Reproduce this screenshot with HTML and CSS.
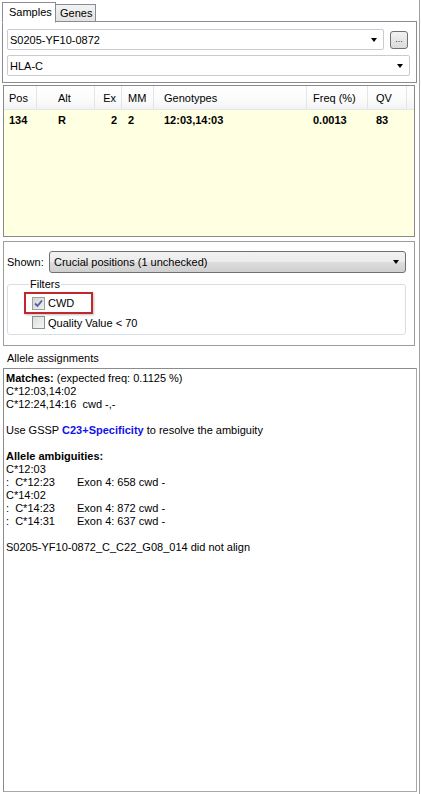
FILE: index.html
```html
<!DOCTYPE html>
<html>
<head>
<meta charset="utf-8">
<link rel="stylesheet" href="styles.css">
</head>
<body>
<div class="app">
  <div class="tabs">
    <div class="tab active">Samples</div>
    <div class="tab">Genes</div>
  </div>
  <div class="tabpage">
    <div class="row1">
      <div class="combo grow"><span>S0205-YF10-0872</span><span class="arrow"></span></div>
      <div class="dots">...</div>
    </div>
    <div class="combo"><span>HLA-C</span><span class="arrow"></span></div>
  </div>

  <div class="grid">
    <div class="ghead">
      <div class="c c1">Pos</div>
      <div class="c c2">Alt</div>
      <div class="c c3">Ex</div>
      <div class="c c4">MM</div>
      <div class="c c5">Genotypes</div>
      <div class="c c6">Freq (%)</div>
      <div class="c c7">QV</div>
      <div class="c c8"></div>
    </div>
    <div class="grow-row">
      <div class="c c1">134</div>
      <div class="c c2">R</div>
      <div class="c c3">2</div>
      <div class="c c4">2</div>
      <div class="c c5">12:03,14:03</div>
      <div class="c c6">0.0013</div>
      <div class="c c7">83</div>
      <div class="c c8"></div>
    </div>
  </div>

  <div class="panel">
    <div class="shown">
      <span class="shown-label">Shown:</span>
      <div class="dropbtn"><span>Crucial positions (1 unchecked)</span><span class="arrow"></span></div>
    </div>
    <fieldset class="filters">
      <legend>Filters</legend>
      <div class="chk chk-hl">
        <span class="box checked"><svg width="9" height="9" viewBox="0 0 9 9"><path d="M1 4.5 L3.5 7 L8 1.5" fill="none" stroke="#4a5fa8" stroke-width="1.8"/></svg></span>
        <span>CWD</span>
      </div>
      <div class="chk chk-q">
        <span class="box"></span>
        <span>Quality Value &lt; 70</span>
      </div>
    </fieldset>
  </div>

  <div class="al-label">Allele assignments</div>
  <div class="textbox">
    <div><b>Matches:</b> (expected freq: 0.1125 %)</div>
    <div>C*12:03,14:02</div>
    <div>C*12:24,14:16  cwd -,-</div>
    <div>&nbsp;</div>
    <div>Use GSSP <b class="blue">C23+Specificity</b> to resolve the ambiguity</div>
    <div>&nbsp;</div>
    <div><b>Allele ambiguities:</b></div>
    <div>C*12:03</div>
    <div><span class="amb">:  C*12:23</span>Exon 4: 658 cwd -</div>
    <div>C*14:02</div>
    <div><span class="amb">:  C*14:23</span>Exon 4: 872 cwd -</div>
    <div><span class="amb">:  C*14:31</span>Exon 4: 637 cwd -</div>
    <div>&nbsp;</div>
    <div>S0205-YF10-0872_C_C22_G08_014 did not align</div>
  </div>
</div>
</body>
</html>
```

FILE: styles.css
```css
* { box-sizing: border-box; }
html, body { margin: 0; padding: 0; background: #ffffff; }
body {
  font-family: "Liberation Sans", Arial, sans-serif;
  font-size: 11px;
  color: #000;
  width: 421px;
  height: 794px;
  overflow: hidden;
}
.app {
  width: 420px;
  height: 794px;
  border-right: 1px solid #a0a0a0;
  display: flex;
  flex-direction: column;
}
.tabs {
  display: flex;
  align-items: flex-end;
  height: 22px;
  padding-left: 2px;
  position: relative;
  z-index: 1;
}
.tab {
  border: 1px solid #898c95;
  border-bottom: none;
  border-left: none;
  padding: 0 4px;
  height: 17px;
  line-height: 17px;
  background: linear-gradient(#f3f3f3, #e3e3e3);
  width: 40px;
  margin-bottom: 1px;
}
.tab.active {
  width: 54px;
  height: 21px;
  line-height: 18px;
  background: #ffffff;
  padding-left: 6px;
  border-left: 1px solid #898c95;
  border-bottom: 1px solid #fff;
  margin-bottom: -1px;
}
.tabpage {
  margin-left: 2px;
  width: 415px;
  border: 1px solid #898c95;
  padding: 7px 6px 6px 4px;
  display: flex;
  flex-direction: column;
  gap: 5px;
  margin-top: -1px;
}
.row1 { display: flex; gap: 6px; align-items: center; }
.grow { flex: 1; }
.combo {
  height: 21px;
  border: 1px solid #c9cbd0;
  border-radius: 2px;
  background: #fff;
  display: flex;
  align-items: center;
  justify-content: space-between;
  padding: 0 6px 0 2px;
}
.arrow {
  width: 0; height: 0;
  border-left: 3.5px solid transparent;
  border-right: 3.5px solid transparent;
  border-top: 4px solid #000;
}
.dots {
  width: 18px;
  height: 18px;
  margin-right: 2px;
  border: 1px solid #707070;
  border-radius: 3px;
  background: linear-gradient(#f2f2f2, #dadada);
  font-size: 9px;
  text-align: center;
  line-height: 15px;
  color: #333;
}
.grid {
  margin: 2px 0 0 3px;
  width: 412px;
  height: 152px;
  border: 1px solid #8a8a8a;
  background: #ffffe1;
}
.ghead, .grow-row {
  display: grid;
  grid-template-columns: 33px 58px 27px 32px 153px 61px 39px 1fr;
}
.ghead {
  height: 24px;
  background: linear-gradient(#ffffff, #fbfbfb 60%, #f2f3f5);
  border-bottom: 1px solid #e6e6e6;
}
.ghead .c {
  line-height: 24px;
  border-right: 1px solid #e3e4e6;
}
.ghead .c8 { border-right: none; }
.grow-row { height: 20px; font-weight: bold; }
.grow-row .c { line-height: 20px; }
.c { white-space: nowrap; overflow: hidden; }
.c1 { padding-left: 5px; }
.c2 { padding-left: 21px; }
.c3 { text-align: right; padding-right: 5px; }
.c4 { padding-left: 6px; }
.c5 { padding-left: 10px; }
.c6 { padding-left: 6px; }
.c7 { padding-left: 8px; }
.panel {
  margin: 4px 0 0 3px;
  width: 412px;
  height: 105px;
  border: 1px solid #9c9c9c;
  padding: 9px 0 0 3px;
}
.shown { display: flex; align-items: center; }
.shown-label { width: 42px; }
.dropbtn {
  width: 357px;
  height: 22px;
  border: 1px solid #707070;
  border-radius: 3px;
  background: linear-gradient(#f2f2f2 0%, #ebebeb 50%, #dddddd 51%, #cfcfcf 100%);
  display: flex;
  align-items: center;
  justify-content: space-between;
  padding: 0 6px 0 4px;
}
.filters {
  margin: 5px 0 0 0;
  width: 399px;
  border: 1px solid #d5dfe5;
  border-radius: 3px;
  padding: 1px 0 3px 16px;
  min-width: 0;
}
.filters legend {
  padding: 0 1px;
  margin-left: 5px;
  line-height: 13px;
}
.chk { display: flex; align-items: center; gap: 3px; }
.chk-hl {
  width: 69px;
  height: 22px;
  border: 2px solid #c0282d;
  padding-left: 6px;
  box-shadow: 1px 1px 2px rgba(0,0,0,0.25);
}
.chk-q { height: 17px; padding-left: 8px; }
.box {
  width: 13px;
  height: 13px;
  border: 1px solid #8e8f8f;
  background: linear-gradient(135deg, #dcdcdc, #f6f6f6);
  display: flex;
  align-items: center;
  justify-content: center;
}
.box.checked { background: linear-gradient(135deg, #d4d4d4, #f0f0f0); border-color: #a0a0a0; }
.al-label {
  padding: 6px 0 3px 7px;
  line-height: 13px;
}
.textbox {
  margin-left: 3px;
  width: 414px;
  height: 424px;
  border: 1px solid #8c8c8c;
  border-right-color: #a8a8a8;
  border-bottom-color: #a8a8a8;
  padding: 3px 2px;
  line-height: 13px;
}
.textbox div { white-space: pre; }
.blue { color: #1111ee; }
.amb { display: inline-block; width: 71px; }
```
